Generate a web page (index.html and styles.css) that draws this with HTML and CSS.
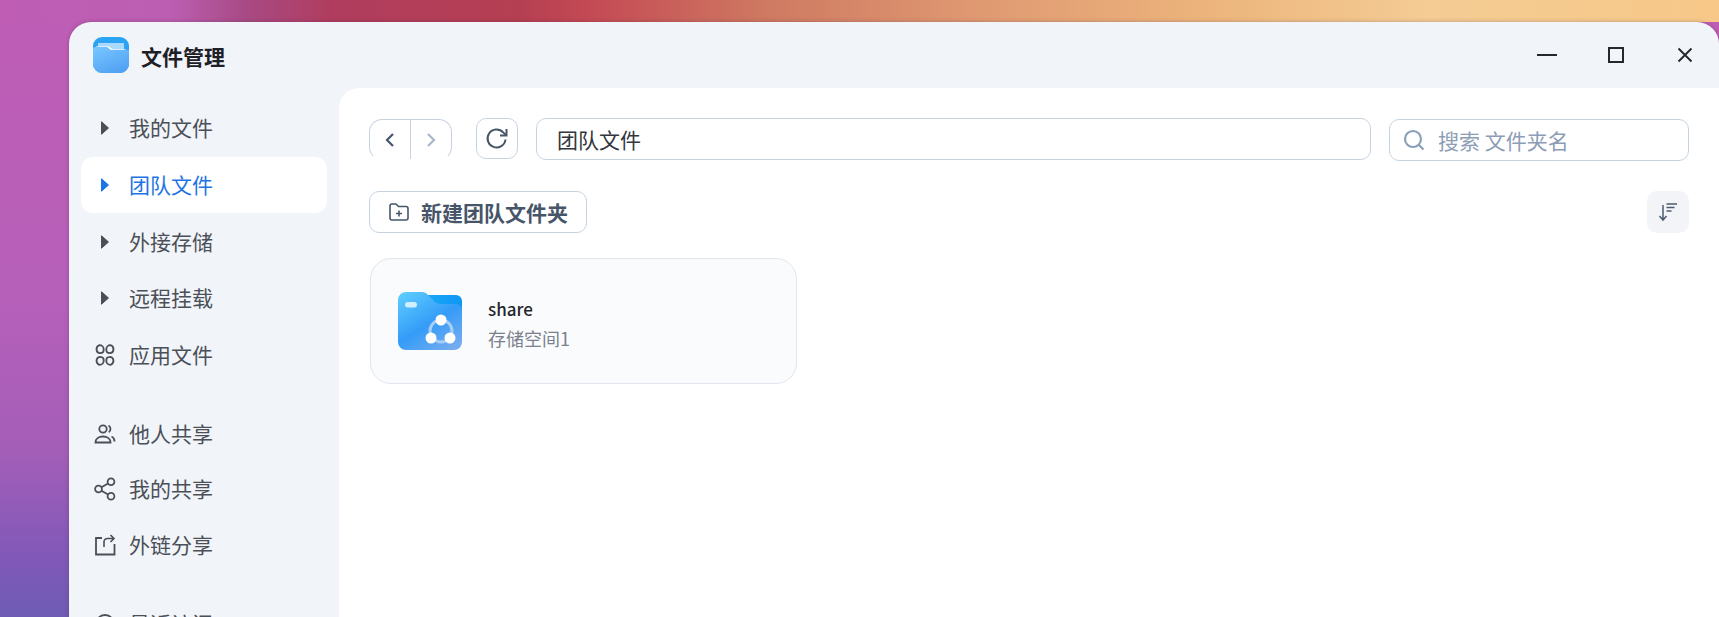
FILE: index.html
```html
<!DOCTYPE html>
<html lang="zh">
<head>
<meta charset="utf-8">
<title>文件管理</title>
<link rel="stylesheet" href="styles.css">
</head>
<body>
<div class="window">
  <header class="titlebar">
    <svg class="logo" viewBox="0 0 36 36">
      <defs>
        <linearGradient id="lg1" x1="0" y1="0" x2="0" y2="1"><stop offset="0" stop-color="#2aa4f4"/><stop offset="1" stop-color="#3b9bf0"/></linearGradient>
        <linearGradient id="lg2" x1="0.2" y1="0" x2="0.8" y2="1"><stop offset="0" stop-color="#75c4ff"/><stop offset="1" stop-color="#4f9ff3"/></linearGradient>
      </defs>
      <rect width="36" height="36" rx="9" fill="url(#lg1)"/>
      <path d="M5 6h26v8H5z" fill="#a9d9fb"/>
      <path d="M3 9.500h13l4 3h13v5H3z" fill="#fff"/>
      <path d="M0 12a2 2 0 0 1 2-2h11.500c2 0 3 3 5 3H36v14a9 9 0 0 1-9 9H9a9 9 0 0 1-9-9z" fill="url(#lg2)"/>
    </svg>
    <span class="app-title">文件管理</span>
    <div class="win-controls">
      <button class="win-btn" aria-label="最小化"><svg width="22" height="16" viewBox="0 0 22 16"><path d="M1 8h20" stroke="#23272e" stroke-width="2"/></svg></button>
      <button class="win-btn" aria-label="最大化"><svg width="18" height="18" viewBox="0 0 18 18"><rect x="2" y="2" width="14" height="14" fill="none" stroke="#23272e" stroke-width="2"/></svg></button>
      <button class="win-btn" aria-label="关闭"><svg width="16" height="16" viewBox="0 0 16 16"><path d="M1.500 1.500l13 13M14.500 1.500l-13 13" stroke="#23272e" stroke-width="1.900" fill="none"/></svg></button>
    </div>
  </header>
  <div class="layout">
    <nav class="sidebar">
      <div class="nav-group">
        <a class="nav-item"><span class="nav-icon"><svg class="caret" width="10" height="16" viewBox="0 0 10 16"><path d="M1.500 1.800L8.500 8l-7 6.200z"/></svg></span><span class="nav-label">我的文件</span></a>
        <a class="nav-item active"><span class="nav-icon"><svg class="caret" width="10" height="16" viewBox="0 0 10 16"><path d="M1.500 1.800L8.500 8l-7 6.200z"/></svg></span><span class="nav-label">团队文件</span></a>
        <a class="nav-item"><span class="nav-icon"><svg class="caret" width="10" height="16" viewBox="0 0 10 16"><path d="M1.500 1.800L8.500 8l-7 6.200z"/></svg></span><span class="nav-label">外接存储</span></a>
        <a class="nav-item"><span class="nav-icon"><svg class="caret" width="10" height="16" viewBox="0 0 10 16"><path d="M1.500 1.800L8.500 8l-7 6.200z"/></svg></span><span class="nav-label">远程挂载</span></a>
        <a class="nav-item"><span class="nav-icon">
          <svg width="24" height="24" viewBox="0 0 22 22" fill="none" stroke="#4b5058" stroke-width="1.700"><path d="M6 2a3.800 3.800 0 0 1 3.800 3.800c0 1.400-.2 2-.5 2.500-.5.800-1.300 1-3.300 1A3.800 3.800 0 0 1 6 2zM16 2a3.800 3.800 0 0 0-3.800 3.800c0 1.400.2 2 .5 2.500.5.800 1.300 1 3.300 1A3.800 3.800 0 0 0 16 2zM6 20a3.800 3.800 0 0 0 3.800-3.800c0-1.400-.2-2-.5-2.500-.5-.8-1.300-1-3.300-1a3.800 3.800 0 0 0 0 7.300zM16 20a3.800 3.800 0 0 1-3.800-3.800c0-1.400.2-2 .5-2.500.5-.8 1.300-1 3.300-1a3.800 3.800 0 0 1 0 7.300z"/></svg>
        </span><span class="nav-label">应用文件</span></a>
      </div>
      <div class="nav-group">
        <a class="nav-item tight"><span class="nav-icon">
          <svg width="22" height="22" viewBox="0 0 22 22" fill="none" stroke="#4b5058" stroke-width="1.800"><circle cx="9" cy="6" r="3.700"/><path d="M1.500 19.500c0-3.500 3-6 7.500-6s7.500 2.500 7.500 6z"/><path d="M14.500 2.500c1.500.8 2 2.200 2 3.500s-.6 2.600-1.800 3.300M17.500 13.500c1.900.8 3 2.500 3 5"/></svg>
        </span><span class="nav-label">他人共享</span></a>
        <a class="nav-item tight"><span class="nav-icon">
          <svg width="22" height="24" viewBox="0 0 22 24" fill="none" stroke="#4b5058" stroke-width="1.800"><circle cx="4.500" cy="12" r="3.400"/><circle cx="17" cy="4.800" r="3.400"/><circle cx="17" cy="19.200" r="3.400"/><path d="M7.500 10.300l6.500-3.800M7.500 13.700l6.500 3.800"/></svg>
        </span><span class="nav-label">我的共享</span></a>
        <a class="nav-item tight"><span class="nav-icon">
          <svg width="22" height="22" viewBox="0 0 22 22" fill="none" stroke="#4b5058" stroke-width="1.800"><path d="M8 4H2v16.500h18.500V10"/><path d="M10 13V8c0-2 1.300-3.500 3.500-3.500H20M16.500 1l3.500 3.500L16.500 8" stroke-width="1.600"/></svg>
        </span><span class="nav-label">外链分享</span></a>
      </div>
      <div class="nav-group">
        <a class="nav-item"><span class="nav-icon">
          <svg width="22" height="22" viewBox="0 0 22 22" fill="none" stroke="#4b5058" stroke-width="1.800"><circle cx="11" cy="11" r="9"/><path d="M11 6v5l3 3"/></svg>
        </span><span class="nav-label">最近访问</span></a>
      </div>
    </nav>
    <main class="panel">
      <div class="toolbar">
        <div class="history">
          <button class="hist-btn" aria-label="后退"><svg width="12" height="16" viewBox="0 0 12 16"><path d="M9 2L3 8l6 6" fill="none" stroke="#475569" stroke-width="2.200"/></svg></button>
          <button class="hist-btn" aria-label="前进"><svg width="12" height="16" viewBox="0 0 12 16"><path d="M3 2l6 6-6 6" fill="none" stroke="#a9b8cc" stroke-width="2.200"/></svg></button>
        </div>
        <button class="refresh" aria-label="刷新"><svg width="24" height="24" viewBox="0 0 24 24" fill="none" stroke="#475569" stroke-width="2"><path d="M20.500 12.500A9 9 0 1 1 18.200 5.400L21 8"/><path d="M21.500 2v6.500h-6.500"/></svg></button>
        <div class="path">团队文件</div>
        <div class="search">
          <svg width="22" height="22" viewBox="0 0 22 22" fill="none" stroke="#8aa0b8" stroke-width="2.200"><circle cx="10" cy="10" r="8"/><path d="M16 16l4.500 4.500"/></svg>
          <span>搜索 文件夹名</span>
        </div>
      </div>
      <div class="actions">
        <button class="new-btn">
          <svg width="20" height="18" viewBox="0 0 20 18" fill="none" stroke="#475569" stroke-width="1.600"><path d="M1 3a2 2 0 0 1 2-2h4l2.500 2.500H17a2 2 0 0 1 2 2V15a2 2 0 0 1-2 2H3a2 2 0 0 1-2-2z"/><path d="M10 7.500v6M7 10.500h6"/></svg>
          新建团队文件夹
        </button>
        <button class="sort-btn" aria-label="排序"><svg width="20" height="20" viewBox="0 0 20 20" fill="none" stroke="#4d5b72" stroke-width="1.500"><path d="M5 3v15M1.500 14L5 18l3.500-4"/><path d="M8.500 2H19M8.500 5.500H16.500M8.500 9H13.500" stroke-width="1.700"/></svg></button>
      </div>
      <div class="grid">
        <article class="card">
          <svg class="folder" width="64" height="58" viewBox="0 0 64 58">
            <defs>
              <linearGradient id="f1" x1="0" y1="0" x2="1" y2="0"><stop offset="0" stop-color="#1aa8f8"/><stop offset="1" stop-color="#0f96f5"/></linearGradient>
              <linearGradient id="f2" x1="0.100" y1="0" x2="0.800" y2="1"><stop offset="0" stop-color="#5ccbff"/><stop offset="0.550" stop-color="#349cf8"/><stop offset="1" stop-color="#74abf0"/></linearGradient>
            </defs>
            <path d="M26 3h32a6 6 0 0 1 6 6v14H26z" fill="url(#f1)"/>
            <path d="M0 8a8 8 0 0 1 8-8h16c4 0 6 3 9 6s5 6 10 6h15a6 6 0 0 1 6 6v32a8 8 0 0 1-8 8H8a8 8 0 0 1-8-8z" fill="url(#f2)"/>
            <rect x="7" y="10" width="12" height="5.500" rx="2.700" fill="#cfeeff"/>
            <circle cx="43" cy="39" r="11" fill="none" stroke="#a5cff6" stroke-width="3"/>
            <circle cx="43" cy="28" r="5.500" fill="#fff"/>
            <circle cx="33" cy="46" r="5.500" fill="#fff"/>
            <circle cx="52" cy="46" r="5.500" fill="#fff"/>
          </svg>
          <div class="card-text">
            <div class="card-name">share</div>
            <div class="card-sub">存储空间1</div>
          </div>
        </article>
      </div>
    </main>
  </div>
</div>
</body>
</html>
```
FILE: styles.css
```css
* { box-sizing: border-box; }
html, body { height: 100%; margin: 0; overflow: hidden; }
body {
  font-family: "Noto Sans CJK SC", "Noto Sans", sans-serif;
  padding: 22px 0 0 69px;
  background:
    linear-gradient(90deg, #bf5db5 0, #bc5fb2 170px, #a84a85 245px, #b03d5f 330px, #b53f52 520px, #c44a55 590px, #cf7a62 770px, #e09a72 985px, #ecb47c 1205px, #f4cc94 1425px, #f7c888 1719px) top left / 100% 22px no-repeat,
    linear-gradient(180deg, #bf5db5 0, #b660ba 300px, #a45eb8 450px, #8058b8 560px, #6e5cb4 617px);
}
button { font: inherit; background: none; padding: 0; cursor: pointer; }

.window {
  height: 100%;
  display: flex;
  flex-direction: column;
  background: #f1f4f9;
  border-radius: 22px 22px 0 0;
  box-shadow: 0 0 4px rgba(60, 40, 60, .3);
  overflow: hidden;
}

.titlebar {
  flex: none;
  height: 66px;
  display: flex;
  align-items: center;
  padding-left: 24px;
}
.logo { width: 36px; height: 36px; flex: none; }
.app-title { margin: 2px 0 0 12px; font-size: 21px; font-weight: 700; color: #1d2026; }
.win-controls { margin-left: auto; display: flex; }
.win-btn {
  width: 69px;
  height: 66px;
  border: 0;
  display: flex;
  align-items: center;
  justify-content: center;
}

.layout { flex: 1; min-height: 0; display: flex; }

.sidebar {
  flex: none;
  width: 270px;
  padding: 12px 12px 0;
  display: flex;
  flex-direction: column;
  gap: 23px;
  overflow: hidden;
}
.nav-group { display: flex; flex-direction: column; gap: 0.8px; }
.nav-item {
  flex: none;
  height: 56px;
  display: flex;
  align-items: center;
  padding-left: 12px;
  gap: 12px;
  border-radius: 12px;
  font-size: 21px;
  color: #4b5058;
}
.nav-item.tight { height: 55px; }
.nav-item.active { background: #fff; color: #1f74e4; }
.nav-icon { width: 24px; display: flex; align-items: center; justify-content: center; flex: none; }
.nav-label { margin-bottom: 2px; }
.caret {
  fill: #4b5058;
  stroke: #4b5058;
  stroke-width: 1;
  stroke-linejoin: round;
}
.active .caret { fill: #1f74e4; stroke: #1f74e4; }

.panel {
  flex: 1;
  min-width: 0;
  background: #fff;
  border-top-left-radius: 20px;
  padding: 30px 30px 0;
  display: flex;
  flex-direction: column;
}

.toolbar { display: flex; align-items: flex-start; height: 42px; }
.history {
  margin-top: 1px;
  width: 83px;
  height: 41px;
  display: flex;
  border: 1px solid #c8d3e1;
  border-bottom-color: transparent;
  border-radius: 13px;
}
.hist-btn {
  flex: 1;
  border: 0;
  display: flex;
  align-items: center;
  justify-content: center;
}
.hist-btn + .hist-btn { border-left: 1px solid #c8d3e1; }
.refresh {
  margin-left: 24px;
  width: 42px;
  height: 41px;
  border: 1px solid #c8d3e1;
  border-radius: 10px;
  display: flex;
  align-items: center;
  justify-content: center;
}
.path {
  margin-left: 18px;
  flex: 1;
  height: 42px;
  border: 1px solid #c8d3e1;
  border-radius: 10px;
  padding-left: 20px;
  display: flex;
  align-items: center;
  font-size: 21px;
  color: #33373d;
}
.search {
  margin: 1px 0 0 18px;
  width: 300px;
  height: 42px;
  border: 1px solid #c8d3e1;
  border-radius: 10px;
  padding-left: 13px;
  display: flex;
  align-items: center;
  gap: 13px;
  font-size: 21px;
  color: #8c9db5;
}

.actions {
  margin-top: 31px;
  display: flex;
  justify-content: space-between;
}
.new-btn {
  width: 218px;
  height: 42px;
  border: 1px solid #c8d3e1;
  border-radius: 10px;
  display: flex;
  align-items: center;
  padding-left: 19px;
  gap: 12px;
  font-size: 21px;
  font-weight: 700;
  color: #475569;
}
.sort-btn {
  width: 42px;
  height: 42px;
  border: 0;
  border-radius: 10px;
  background: #f2f4f7;
  display: flex;
  align-items: center;
  justify-content: center;
}

.grid { margin: 25px 0 0 1px; display: flex; }
.card {
  width: 427px;
  height: 126px;
  border: 1px solid #e2e6ef;
  border-radius: 21px;
  background: #fafbfd;
  display: flex;
  align-items: center;
  padding-left: 27px;
  gap: 26px;
}
.folder { flex: none; }
.card-text { display: flex; flex-direction: column; padding-top: 5px; }
.card-name { font-size: 17px; font-weight: 500; color: #24272c; line-height: 24px; margin: 1px 0 4px; }
.card-sub { font-size: 18px; color: #7a818c; line-height: 26px; }
```
